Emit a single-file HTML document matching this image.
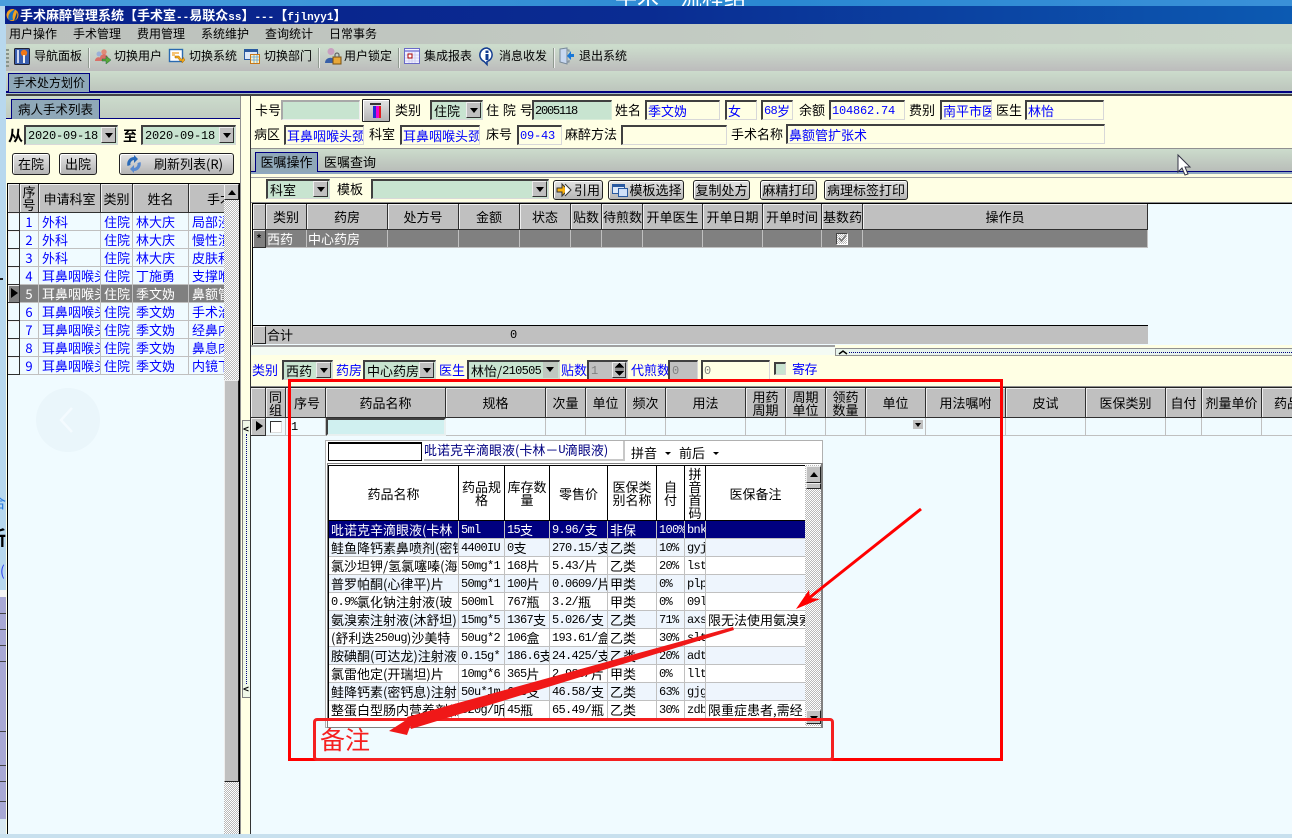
<!DOCTYPE html>
<html lang="zh-CN"><head><meta charset="utf-8"><title>手术麻醉管理系统</title>
<style>
*{box-sizing:border-box}
html,body{margin:0;padding:0;width:1292px;height:838px;overflow:hidden;background:#c8e0ee}
body{position:relative;font:13px/18px "WenQuanYi Zen Hei","Noto Sans CJK SC",sans-serif;color:#000}
i{font:normal 12px/17px "Liberation Mono",monospace;letter-spacing:-.7px;vertical-align:top;position:relative;top:1px}
u{font:bold 11px/1 "Liberation Mono",monospace;text-decoration:none}
.b{position:absolute}
.t{position:absolute;white-space:nowrap;line-height:18px}
.s12{font-size:12px}
.bl{color:#00f}
.i{position:absolute;height:20px;background:#ffffe4;border:2px solid;border-color:#404040 #d8d8d8 #d8d8d8 #404040;border-right-width:1px;border-bottom-width:1px;color:#00f;padding:0 1px;overflow:hidden;white-space:nowrap;line-height:17px}
.g{background:#c8e4d0;color:#000}
.c{position:absolute;height:20px;background:#c8e4d0;border:2px solid;border-color:#404040 #d8d8d8 #d8d8d8 #404040;border-right-width:1px;border-bottom-width:1px;padding:0 2px;white-space:nowrap;overflow:hidden;line-height:17px}
.a{position:absolute;right:1px;top:0;width:15px;height:16px;background:#c0c0c0;border:1px solid;border-color:#eee #303030 #303030 #eee}
.a:after{content:"";position:absolute;left:3px;top:5px;border:4px solid transparent;border-top:5px solid #000;border-bottom:0}
.btn{position:absolute;height:20px;background:linear-gradient(#e4e4e4,#b4b4b4);border:1px solid #222;border-radius:3px;text-align:center;line-height:17px;white-space:nowrap;box-shadow:inset 1px 1px 0 #fff}
table{position:absolute;border-collapse:separate;border-spacing:0;table-layout:fixed;left:0;top:0}
td,th{padding:0 1px;overflow:hidden;white-space:nowrap;font-weight:normal;height:18px;line-height:17px;border-right:1px solid #c0c0c0;border-bottom:1px solid #c0c0c0}
th{background:#c0c0c0;text-align:center;border-right:1px solid #303030;border-bottom:1px solid #303030;box-shadow:inset 1px 1px 0 #f0f0f0}
th.w{white-space:normal;line-height:13px;padding:0}
td.h{background:#c0c0c0;border-right:1px solid #303030;border-bottom:1px solid #303030;box-shadow:inset 1px 1px 0 #f0f0f0;position:relative;padding:0}
.tr{position:absolute;left:3px;top:3px;border:5px solid transparent;border-left:7px solid #000;border-right:0;width:0;height:0}
.lg td{color:#00f;background:#f0fbff;padding:0 0 0 3px}
.lg tr.sel td{background:#808080;color:#fff}
.lg td.n{text-align:center;padding:0}
.lg td.h{padding:0}
.mg td{background:#808080;color:#fff}
.pg td{background:#fff;padding:0 1px 0 2px}
.pg tr.e td{background:#eef5fd}
.pg tr.sel td{background:#000080;color:#fff}
.pg th{background:#fff;box-shadow:none;border-right:1px solid #000;border-bottom:1px solid #000}
.ck{background:repeating-conic-gradient(#b8b8b8 0 25%,#fff 0 50%) 0 0/2px 2px}
.sb{position:absolute;background:#c0c0c0;border:1px solid;border-color:#eee #222 #222 #eee}
.up:after,.dn:after{content:"";position:absolute;left:3px;top:5px;border:4px solid transparent}
.up:after{border-bottom:5px solid #000;border-top:0}
.dn:after{border-top:5px solid #000;border-bottom:0}
.sep{position:absolute;top:48px;width:2px;height:20px;background:#909a90;border-right:1px solid #eee}
.tab{position:absolute;background:#8fa8b8;border:1px solid #000080;border-bottom:0;text-align:center;white-space:nowrap;line-height:18px}
svg{position:absolute;overflow:visible}
</style></head><body>

<!-- background behind the window -->
<div class="b" style="left:0;top:0;width:1292px;height:6px;background:linear-gradient(90deg,#4a9edc,#2a88d2 60%,#3a90d8);overflow:hidden">
<span class="t" style="left:615px;top:-16px;font-size:22px;line-height:26px;color:#fff">手术</span>
<span class="t" style="left:680px;top:-16px;font-size:22px;line-height:26px;color:#fff">流程结</span></div>
<div class="b" style="left:0;top:6px;width:7px;height:590px;background:#b8d8ee"></div>
<div class="b" style="left:0;top:590px;width:7px;height:8px;background:#f4f4f4"></div>
<div class="b" style="left:0;top:597px;width:6px;height:222px;background:#a8a8d4"></div>
<div class="b" style="left:0;top:613px;width:6px;height:1px;background:#444"></div>
<div class="b" style="left:0;top:629px;width:6px;height:1px;background:#444"></div>
<div class="b" style="left:0;top:645px;width:6px;height:1px;background:#444"></div>
<div class="b" style="left:0;top:661px;width:6px;height:1px;background:#444"></div>
<div class="b" style="left:0;top:731px;width:6px;height:1px;background:#444"></div>
<div class="b" style="left:0;top:765px;width:6px;height:1px;background:#444"></div>
<div class="b" style="left:0;top:781px;width:6px;height:1px;background:#444"></div>
<div class="b" style="left:0;top:801px;width:6px;height:1px;background:#444"></div>
<div class="b" style="left:0;top:819px;width:7px;height:15px;background:#d8e8f2"></div>
<div class="b" style="left:0;top:834px;width:1292px;height:4px;background:#c8e0ee"></div>
<div class="b" style="left:0;top:278px;width:3px;height:2px;background:#222"></div>
<div class="b" style="left:0;top:480px;width:6px;height:110px;overflow:hidden">
<span class="t" style="left:-9px;top:14px;font-size:15px;color:#2a7ae0">合</span>
<span class="t" style="left:-14px;top:48px;font-size:20px;font-weight:bold">新</span>
<span class="t" style="left:0;top:82px;font-size:14px;color:#3040f0">(</span>
</div>

<!-- title -->
<div class="b" style="left:5px;top:6px;width:1287px;height:18px;background:linear-gradient(90deg,#08208a,#0a2c92 50%,#0c5ab2)"></div>
<svg style="left:6px;top:8px" width="13" height="14" viewBox="0 0 13 14"><circle cx="6.5" cy="7" r="6" fill="#f0a020"/><path d="M3 12C1 8 4 3 10 1c-3 3-4 7-3 11z" fill="#1a6fc0"/><path d="M8 13c3-2 4-5 3-9-1 3-2 6-3 9z" fill="#0a3a80"/></svg>
<div class="t" style="left:20px;top:6px;color:#fff;font-weight:bold;font-size:13px">手术麻醉管理系统【手术室<u>--</u>易联众<u>ss</u>】<u>---</u>【<u>fjlnyy1</u>】</div>

<!-- menu -->
<div class="b" style="left:6px;top:24px;width:1286px;height:20px;background:linear-gradient(90deg,#bcc0bc,#c8d4c8)"></div>
<span class="t s12" style="left:9px;top:25px">用户操作</span>
<span class="t s12" style="left:73px;top:25px">手术管理</span>
<span class="t s12" style="left:137px;top:25px">费用管理</span>
<span class="t s12" style="left:201px;top:25px">系统维护</span>
<span class="t s12" style="left:265px;top:25px">查询统计</span>
<span class="t s12" style="left:329px;top:25px">日常事务</span>

<!-- toolbar -->
<div class="b" style="left:6px;top:44px;width:1286px;height:27px;background:linear-gradient(#ccdccc 10%,#bcbcbc)"></div>
<div class="b" style="left:6px;top:49px;width:3px;height:18px;background:repeating-linear-gradient(#8a948a 0 2px,transparent 2px 4px)"></div>
<svg style="left:14px;top:48px" width="16" height="17" viewBox="0 0 16 17"><rect x=".5" y=".5" width="15" height="16" rx="1" fill="#3a5fb0" stroke="#223"/><path d="M3 2h2v13H3z" fill="#cfd8f0"/><circle cx="10" cy="5" r="3.2" fill="#f07818"/><path d="M9 7h2v8H9z" fill="#eee"/></svg>
<span class="t s12" style="left:34px;top:47px">导航面板</span>
<div class="sep" style="left:88px"></div>
<svg style="left:94px;top:48px" width="17" height="17" viewBox="0 0 17 17"><circle cx="5" cy="6" r="2.5" fill="#9ab0d8"/><circle cx="10" cy="4" r="2.7" fill="#e08a78"/><path d="M1 13c0-5 7-5 7 0zM6 10c0-5 8-5 8 0v1H6z" fill="#d87068"/><path d="M8 11h4V8l5 4-5 4v-3H8z" fill="#58a838" stroke="#264" stroke-width=".5"/></svg>
<span class="t s12" style="left:114px;top:47px">切换用户</span>
<svg style="left:169px;top:49px" width="16" height="16" viewBox="0 0 16 16"><rect x=".5" y=".5" width="13" height="12" fill="#fff" stroke="#2a6ab0" stroke-width="1.4"/><path d="M3 4h7M3 6h3" stroke="#f0a020" stroke-width="1.2"/><path d="M6 7h4l2 3h2v-2l2 3-3 3v-2h-2l-2-3H6z" fill="#f0a818" stroke="#a60" stroke-width=".5"/></svg>
<span class="t s12" style="left:189px;top:47px">切换系统</span>
<svg style="left:244px;top:48px" width="16" height="17" viewBox="0 0 16 17"><rect x=".5" y="1.5" width="13" height="10" fill="#dde8f8" stroke="#2a5aa0"/><path d="M1 2h12v2H1z" fill="#2a5aa0"/><rect x="6.5" y="6.5" width="9" height="9" fill="#fff4c8" stroke="#c87818"/><path d="M7 9h8M10 7v8M13 7v8M7 12h8" stroke="#58a0d8" stroke-width=".8"/></svg>
<span class="t s12" style="left:264px;top:47px">切换部门</span>
<div class="sep" style="left:318px"></div>
<svg style="left:325px;top:47px" width="17" height="18" viewBox="0 0 17 18"><circle cx="6" cy="4.5" r="3.5" fill="#c8a0c0"/><path d="M0 16c0-7 11-7 11 0z" fill="#3860a8"/><rect x="8" y="10" width="8" height="7" fill="#e8a838" stroke="#7a5010"/><path d="M10 10V8a2 2 0 0 1 4 0v2" fill="none" stroke="#666" stroke-width="1.2"/></svg>
<span class="t s12" style="left:344px;top:47px">用户锁定</span>
<div class="sep" style="left:398px"></div>
<svg style="left:404px;top:48px" width="16" height="16" viewBox="0 0 16 16"><rect x=".5" y=".5" width="15" height="15" fill="#f2f2ff" stroke="#6a6ac8"/><path d="M1 2h14v2H1z" fill="#9a9ae0"/><path d="M1 7h14M1 10h14M1 13h14M5 4v11M8 4v11M11 4v11" stroke="#c8c8f0" stroke-width=".8"/><rect x="4" y="6" width="4" height="4" fill="#fff" stroke="#a00"/></svg>
<span class="t s12" style="left:424px;top:47px">集成报表</span>
<svg style="left:479px;top:47px" width="16" height="18" viewBox="0 0 16 18"><path d="M8 1a7 7 0 0 0-3 13.400L8 17.500v-3A7 7 0 0 0 8 1z" fill="#fff" stroke="#123c90" stroke-width="1.500"/><rect x="6.500" y="3.500" width="3" height="2.500" fill="#123c90"/><rect x="6.500" y="7" width="3" height="6" fill="#123c90"/></svg>
<span class="t s12" style="left:499px;top:47px">消息收发</span>
<div class="sep" style="left:553px"></div>
<svg style="left:559px;top:47px" width="16" height="18" viewBox="0 0 16 18"><path d="M1 2l7-1v16l-7-2z" fill="#c8d8f0" stroke="#789"/><path d="M8 3h2v2M10 13v2H8" fill="none" stroke="#789"/><path d="M15 7h-3V4L8 9l4 4v-3h3z" fill="#1878d8"/></svg>
<span class="t s12" style="left:579px;top:47px">退出系统</span>

<!-- doc tab bar -->
<div class="b" style="left:6px;top:71px;width:1286px;height:21px;background:linear-gradient(#ccdccc,#bcc4bc)"></div>
<div class="b" style="left:6px;top:91px;width:1286px;height:2px;background:#000080"></div>
<div class="b" style="left:6px;top:93px;width:1286px;height:1px;background:#a8c0c8"></div>
<div class="b" style="left:6px;top:94px;width:1286px;height:2px;background:#444"></div>
<div class="tab s12" style="left:8px;top:73px;width:82px;height:19px">手术处方划价</div>

<!-- left panel -->
<div class="b" style="left:6px;top:96px;width:236px;height:738px;background:#ffffe4"></div>
<div class="b" style="left:6px;top:96px;width:236px;height:23px;background:linear-gradient(#ccdccc,#c0cac0)"></div>
<div class="b" style="left:6px;top:118px;width:235px;height:1px;background:#000080"></div>
<div class="tab" style="left:11px;top:99px;width:89px;height:20px;font-size:12.500px">病人手术列表</div>
<span class="t" style="left:8px;top:127px;font-size:15px;font-weight:bold">从</span>
<div class="c" style="left:24px;top:125px;width:94px;height:20px"><i style="letter-spacing:-.2px">2020-09-18</i><span class="a"></span></div>
<span class="t" style="left:123px;top:127px;font-size:14px;font-weight:bold">至</span>
<div class="c" style="left:141px;top:125px;width:95px;height:20px"><i style="letter-spacing:-.2px">2020-09-18</i><span class="a"></span></div>
<div class="btn" style="left:12px;top:153px;width:38px;height:22px;line-height:19px">在院</div>
<div class="btn" style="left:59px;top:153px;width:38px;height:22px;line-height:19px">出院</div>
<div class="btn" style="left:119px;top:153px;width:115px;height:22px;line-height:19px;padding-left:24px">刷新列表(R)</div>
<svg style="left:125px;top:155px" width="18" height="18" viewBox="0 0 18 18"><path d="M9 2a7 7 0 0 0-6.500 9l3-1A4 4 0 0 1 9 5V8l4-4-4-4z" fill="#2a6ab8"/><path d="M9 16a7 7 0 0 0 6.500-9l-3 1A4 4 0 0 1 9 13v-3l-4 4 4 4z" fill="#5a8ad0"/></svg>

<!-- left grid -->
<div class="b" style="left:7px;top:183px;width:233px;height:651px;background:#f0fbff;border-left:1px solid #000;border-top:1px solid #000;border-right:1px solid #000"></div>
<div class="b" style="left:8px;top:184px;width:216px;height:650px;overflow:hidden">
<table class="lg" style="width:224px"><colgroup><col style="width:12px"><col style="width:19px"><col style="width:62px"><col style="width:32px"><col style="width:56px"><col style="width:43px"></colgroup>
<tr style="height:29px"><th></th><th class="w" style="height:29px">序号</th><th>申请科室</th><th>类别</th><th>姓名</th><th style="text-align:left;padding-left:18px">手术</th></tr>
<tr><td class="h"></td><td class="n">1</td><td>外科</td><td>住院</td><td>林大庆</td><td>局部浸润</td></tr>
<tr><td class="h"></td><td class="n">2</td><td>外科</td><td>住院</td><td>林大庆</td><td>慢性溃疡</td></tr>
<tr><td class="h"></td><td class="n">3</td><td>外科</td><td>住院</td><td>林大庆</td><td>皮肤和</td></tr>
<tr><td class="h"></td><td class="n">4</td><td>耳鼻咽喉头颈外</td><td>住院</td><td>丁施勇</td><td>支撑喉</td></tr>
<tr class="sel"><td class="h"><span class="tr"></span></td><td class="n">5</td><td>耳鼻咽喉头颈外</td><td>住院</td><td>季文妫</td><td>鼻额管</td></tr>
<tr><td class="h"></td><td class="n">6</td><td>耳鼻咽喉头颈外</td><td>住院</td><td>季文妫</td><td>手术治</td></tr>
<tr><td class="h"></td><td class="n">7</td><td>耳鼻咽喉头颈外</td><td>住院</td><td>季文妫</td><td>经鼻内</td></tr>
<tr><td class="h"></td><td class="n">8</td><td>耳鼻咽喉头颈外</td><td>住院</td><td>季文妫</td><td>鼻息肉</td></tr>
<tr><td class="h"></td><td class="n">9</td><td>耳鼻咽喉头颈外</td><td>住院</td><td>季文妫</td><td>内镜下</td></tr>
</table></div>
<div class="b ck" style="left:224px;top:184px;width:15px;height:650px"></div>
<div class="sb up" style="left:224px;top:184px;width:15px;height:16px"></div>
<div class="sb" style="left:224px;top:380px;width:15px;height:402px;border-color:#eee #222 #222 #eee"></div>

<!-- vertical splitter -->
<div class="b" style="left:240px;top:96px;width:11px;height:738px;background:#ffffe4;border-left:1px solid #909090"></div>
<div class="b" style="left:242px;top:420px;width:9px;height:278px;background:#f0f8e8;border:1px solid #808080"></div>
<div class="b" style="left:246px;top:434px;width:0;height:250px;border-left:1px dotted #000080"></div>
<span class="t" style="left:243px;top:420px;font-size:10px;font-weight:bold">&lt;</span>
<span class="t" style="left:243px;top:680px;font-size:10px;font-weight:bold">&lt;</span>

<!-- right top info -->
<div class="b" style="left:251px;top:96px;width:1041px;height:738px;background:#ffffe4"></div>
<div class="b" style="left:250px;top:96px;width:1px;height:738px;background:#333"></div>
<span class="t" style="left:255px;top:101px">卡号</span>
<div class="i g" style="left:281px;top:100px;width:79px;border-color:#a8a8a8 #eee #eee #a8a8a8"></div>
<div class="btn" style="left:362px;top:99px;width:28px;height:23px;border-radius:1px"></div>
<svg style="left:368px;top:102px" width="15" height="17" viewBox="0 0 15 17"><path d="M2 1h11v2H2z" fill="#333"/><rect x="5" y="4" width="8" height="12" fill="#f000d0"/><rect x="5" y="4" width="3" height="12" fill="#2030d0"/><rect x="11" y="4" width="2" height="12" fill="#e02020"/></svg>
<span class="t" style="left:395px;top:101px">类别</span>
<div class="c" style="left:430px;top:100px;width:53px"><span>住院</span><span class="a"></span></div>
<span class="t" style="left:486px;top:101px;word-spacing:1px">住 院 号</span>
<div class="i g" style="left:532px;top:100px;width:80px;border-color:#404040 #d8ecd8 #d8ecd8 #404040"><i style="letter-spacing:-1.2px">2005118</i></div>
<span class="t" style="left:615px;top:101px">姓名</span>
<div class="i" style="left:645px;top:100px;width:75px">季文妫</div>
<div class="i" style="left:725px;top:100px;width:32px">女</div>
<div class="i" style="left:761px;top:100px;width:32px"><i>68</i>岁</div>
<span class="t" style="left:799px;top:101px">余额</span>
<div class="i" style="left:829px;top:100px;width:76px"><i style="letter-spacing:-.2px">104862.74</i></div>
<span class="t" style="left:909px;top:101px">费别</span>
<div class="i" style="left:940px;top:100px;width:52px">南平市医</div>
<span class="t" style="left:996px;top:101px">医生</span>
<div class="i" style="left:1025px;top:100px;width:79px">林怡</div>

<span class="t" style="left:254px;top:125px">病区</span>
<div class="i" style="left:284px;top:125px;width:80px">耳鼻咽喉头颈外</div>
<span class="t" style="left:369px;top:125px">科室</span>
<div class="i" style="left:400px;top:125px;width:80px">耳鼻咽喉头颈外</div>
<span class="t" style="left:486px;top:125px">床号</span>
<div class="i" style="left:517px;top:125px;width:45px"><i style="letter-spacing:-.2px">09-43</i></div>
<span class="t" style="left:565px;top:125px">麻醉方法</span>
<div class="i" style="left:621px;top:125px;width:106px"></div>
<span class="t" style="left:731px;top:125px">手术名称</span>
<div class="i" style="left:786px;top:124px;width:319px">鼻额管扩张术</div>

<div class="b" style="left:251px;top:148px;width:1041px;height:1px;background:#909090"></div>
<div class="b" style="left:251px;top:149px;width:1041px;height:23px;background:linear-gradient(#ccdccc,#b8bcb8)"></div>
<div class="b" style="left:251px;top:171px;width:1041px;height:1px;background:#000080"></div>
<div class="b" style="left:251px;top:172px;width:1041px;height:2px;background:#8fa8c0"></div>
<div class="b" style="left:251px;top:177px;width:1041px;height:1px;background:#a0a0a0"></div>
<div class="tab" style="left:255px;top:152px;width:63px;height:20px">医嘱操作</div>
<span class="t" style="left:324px;top:153px">医嘱查询</span>

<!-- order toolbar -->
<div class="c" style="left:266px;top:179px;width:64px"><span>科室</span><span class="a"></span></div>
<span class="t" style="left:337px;top:180px">模板</span>
<div class="c" style="left:371px;top:179px;width:178px"><span class="a"></span></div>
<div class="btn" style="left:553px;top:180px;width:50px;padding-left:18px">引用</div>
<svg style="left:556px;top:183px" width="16" height="14" viewBox="0 0 16 14"><path d="M6 1l6 6-6 6V9H1V5h5z" fill="#f8b010" stroke="#333"/><path d="M9 1l6 6-6 6" fill="#fff" stroke="#333"/></svg>
<div class="btn" style="left:608px;top:180px;width:76px;padding-left:19px">模板选择</div>
<svg style="left:612px;top:183px" width="16" height="14" viewBox="0 0 16 14"><rect x=".5" y="1.500" width="12" height="9" fill="#dde8f8" stroke="#2a5aa0"/><path d="M1 2h11v2H1z" fill="#2a5aa0"/><rect x="6.500" y="5.500" width="9" height="8" fill="#cfe0f8" stroke="#2a5aa0"/></svg>
<div class="btn" style="left:693px;top:180px;width:57px">复制处方</div>
<div class="btn" style="left:760px;top:180px;width:57px">麻精打印</div>
<div class="btn" style="left:824px;top:180px;width:84px">病理标签打印</div>

<!-- upper grid -->
<div class="b" style="left:251px;top:202px;width:1041px;height:1px;background:#909090"></div>
<div class="b" style="left:252px;top:203px;width:1040px;height:1px;background:#000"></div>
<div class="b" style="left:252px;top:204px;width:1040px;height:141px;background:#f0fbff;border-left:1px solid #000"></div>
<div class="b" style="left:253px;top:204px;width:895px;height:44px;overflow:hidden">
<table class="mg" style="width:895px"><colgroup><col style="width:13px"><col style="width:41px"><col style="width:81px"><col style="width:71px"><col style="width:61px"><col style="width:51px"><col style="width:31px"><col style="width:41px"><col style="width:60px"><col style="width:60px"><col style="width:59px"><col style="width:41px"><col style="width:285px"></colgroup>
<tr style="height:26px"><th style="height:26px"></th><th>类别</th><th>药房</th><th>处方号</th><th>金额</th><th>状态</th><th>贴数</th><th>待煎数</th><th>开单医生</th><th>开单日期</th><th>开单时间</th><th>基数药</th><th>操作员</th></tr>
<tr><td class="h" style="text-align:center;color:#000">*</td><td>西药</td><td>中心药房</td><td></td><td></td><td></td><td></td><td></td><td></td><td></td><td></td><td style="position:relative"><span class="b ck" style="left:14px;top:3px;width:12px;height:12px;border:1px solid;border-color:#444 #fff #fff #444;background-size:2px 2px"></span><svg style="left:16px;top:4px" width="9" height="9" viewBox="0 0 9 9"><path d="M1 4l2.500 3L8 1" fill="none" stroke="#777" stroke-width="1.500"/></svg></td><td></td></tr>
</table></div>
<div class="b" style="left:253px;top:325px;width:895px;height:1px;background:#000"></div>
<div class="b" style="left:253px;top:326px;width:895px;height:18px;background:#c0c0c0"></div>
<div class="sb" style="left:253px;top:326px;width:13px;height:18px"></div>
<span class="t" style="left:267px;top:326px">合计</span>
<span class="t" style="left:510px;top:326px"><i>0</i></span>
<div class="b" style="left:251px;top:345px;width:584px;height:2px;background:#a0a0a0"></div>
<div class="b" style="left:251px;top:347px;width:1041px;height:9px;background:#ffffe4"></div>
<div class="b" style="left:251px;top:347px;width:584px;height:8px;background:#f4fbf4"></div>
<div class="b" style="left:835px;top:348px;width:457px;height:8px;background:#e8f4ec;border:1px solid #909090;border-right:0"></div>
<div class="b" style="left:849px;top:352px;width:443px;height:0;border-top:1px dotted #000080"></div>
<svg style="left:839px;top:350px" width="8" height="5" viewBox="0 0 8 5"><path d="M0 4l4-3 4 3" fill="none" stroke="#000" stroke-width="1.500"/></svg>

<!-- mid controls -->
<span class="t bl" style="left:252px;top:361px">类别</span>
<div class="c" style="left:282px;top:360px;width:51px"><span>西药</span><span class="a"></span></div>
<span class="t bl" style="left:336px;top:361px">药房</span>
<div class="c" style="left:363px;top:360px;width:73px"><span>中心药房</span><span class="a"></span></div>
<span class="t bl" style="left:439px;top:361px">医生</span>
<div class="c" style="left:467px;top:360px;width:93px"><span>林怡/<i>210505</i></span><span class="a" style="border:0;background:#c0c8c0"></span></div>
<span class="t bl" style="left:561px;top:361px">贴数</span>
<div class="c" style="left:587px;top:360px;width:41px;background:#c0c0c0;color:#808080"><i>1</i><span class="b" style="right:1px;top:0;width:14px;height:16px;background:#c0c0c0;border:1px solid;border-color:#eee #333 #333 #eee"></span></div>
<svg style="left:615px;top:363px" width="9" height="13" viewBox="0 0 9 13"><path d="M4.500 0L9 4.500H0zM0 8h9L4.500 12.500zM0 6h9" fill="#000" stroke="#000" stroke-width=".5"/></svg>
<span class="t bl" style="left:631px;top:361px">代煎数</span>
<div class="c" style="left:668px;top:360px;width:30px;background:#c0c0c0;color:#808080"><i>0</i></div>
<div class="i" style="left:701px;top:360px;width:69px;color:#808080"><i>0</i></div>
<div class="c" style="left:774px;top:362px;width:12px;height:13px"></div>
<span class="t bl" style="left:792px;top:360px;letter-spacing:-.5px">寄存</span>

<!-- lower grid -->
<div class="b" style="left:251px;top:386px;width:1041px;height:1px;background:#909090"></div>
<div class="b" style="left:251px;top:387px;width:1041px;height:447px;background:#f0fbff;border-top:1px solid #222"></div>
<div class="b" style="left:251px;top:388px;width:1041px;height:49px;overflow:hidden">
<table style="width:1060px"><colgroup><col style="width:15px"><col style="width:20px"><col style="width:40px"><col style="width:120px"><col style="width:100px"><col style="width:40px"><col style="width:40px"><col style="width:40px"><col style="width:80px"><col style="width:40px"><col style="width:40px"><col style="width:40px"><col style="width:60px"><col style="width:80px"><col style="width:80px"><col style="width:80px"><col style="width:36px"><col style="width:60px"><col style="width:69px"></colgroup>
<tr style="height:30px"><th style="height:30px"></th><th class="w">同<br>组</th><th style="padding-left:4px">序号</th><th>药品名称</th><th>规格</th><th>次量</th><th>单位</th><th>频次</th><th>用法</th><th class="w">用药<br>周期</th><th class="w">周期<br>单位</th><th class="w">领药<br>数量</th><th>单位</th><th>用法嘱咐</th><th>皮试</th><th>医保类别</th><th>自付</th><th>剂量单价</th><th style="text-align:left;padding-left:12px">药品</th></tr>
<tr><td class="h"><span class="tr" style="left:5px"></span></td><td style="position:relative;background:#f0fbff"><span class="b" style="left:4px;top:3px;width:12px;height:12px;background:#fff;border:1px solid;border-color:#333 #ddd #ddd #333"></span></td><td style="background:#f0fbff;padding-left:5px"><i>1</i></td><td style="background:#d0f0f0;border:2px solid;border-color:#404040 #e8f0f0 #e8f0f0 #404040"></td><td></td><td></td><td></td><td></td><td></td><td></td><td></td><td></td><td style="position:relative"><span class="b" style="right:2px;top:2px;width:10px;height:9px;background:#c0c0c0"></span><span class="b" style="right:4px;top:5px;border:3px solid transparent;border-top:4px solid #000;border-bottom:0"></span></td><td></td><td></td><td></td><td></td><td></td><td></td></tr>
</table></div>

<!-- popup -->
<div class="b" style="left:325px;top:440px;width:498px;height:288px;background:#fff;border:1px solid #b0b0b0"></div>
<div class="i" style="left:328px;top:442px;width:94px;height:19px;background:#fff;border:1px solid #000;border-top-width:2px;border-left-width:1px"></div>
<div class="t" style="left:424px;top:441px;width:201px;height:20px;color:#000080;background:#fff;border-right:2px solid #c8c8c8;border-bottom:2px solid #c8c8c8;overflow:hidden">吡诺克辛滴眼液(卡林－<i>U</i>滴眼液)</div>
<span class="t" style="left:631px;top:444px">拼音</span>
<span class="b" style="left:665px;top:452px;border:3px solid transparent;border-top:3px solid #000;border-bottom:0"></span>
<span class="t" style="left:679px;top:444px">前后</span>
<span class="b" style="left:713px;top:452px;border:3px solid transparent;border-top:3px solid #000;border-bottom:0"></span>
<div class="b" style="left:327px;top:463px;width:496px;height:265px;border:1px solid #808080;border-right-width:2px;background:#fff"></div>
<div class="b" style="left:328px;top:465px;width:477px;height:253px;overflow:hidden;border-left:1px solid #000;border-top:1px solid #000">
<table class="pg" style="width:477px"><colgroup><col style="width:130px"><col style="width:46px"><col style="width:45px"><col style="width:58px"><col style="width:49px"><col style="width:28px"><col style="width:21px"><col style="width:100px"></colgroup>
<tr style="height:55px"><th style="height:55px">药品名称</th><th class="w">药品规<br>格</th><th class="w">库存数<br>量</th><th>零售价</th><th class="w">医保类<br>别名称</th><th class="w">自<br>付</th><th class="w">拼<br>音<br>首<br>码</th><th>医保备注</th></tr>
<tr class="sel"><td>吡诺克辛滴眼液(卡林</td><td><i>5ml</i></td><td><i>15</i>支</td><td><i>9.96/</i>支</td><td>非保</td><td><i>100%</i></td><td><i>bnk</i></td><td></td></tr>
<tr class="e"><td>鲑鱼降钙素鼻喷剂(密钙</td><td><i>4400IU</i></td><td><i>0</i>支</td><td><i>270.15/</i>支</td><td>乙类</td><td><i>10%</i></td><td><i>gyj</i></td><td></td></tr>
<tr><td>氯沙坦钾/氢氯噻嗪(海</td><td><i>50mg*1</i></td><td><i>168</i>片</td><td><i>5.43/</i>片</td><td>乙类</td><td><i>20%</i></td><td><i>lst</i></td><td></td></tr>
<tr class="e"><td>普罗帕酮(心律平)片</td><td><i>50mg*1</i></td><td><i>100</i>片</td><td><i>0.0609/</i>片</td><td>甲类</td><td><i>0%</i></td><td><i>plp</i></td><td></td></tr>
<tr><td><i>0.9%</i>氯化钠注射液(玻</td><td><i>500ml</i></td><td><i>767</i>瓶</td><td><i>3.2/</i>瓶</td><td>甲类</td><td><i>0%</i></td><td><i>09l</i></td><td></td></tr>
<tr class="e"><td>氨溴索注射液(沐舒坦)</td><td><i>15mg*5</i></td><td><i>1367</i>支</td><td><i>5.026/</i>支</td><td>乙类</td><td><i>71%</i></td><td><i>axs</i></td><td style="background:#fff">限无法使用氨溴索</td></tr>
<tr><td>(舒利迭<i>250ug</i>)沙美特</td><td><i>50ug*2</i></td><td><i>106</i>盒</td><td><i>193.61/</i>盒</td><td>乙类</td><td><i>30%</i></td><td><i>slt</i></td><td></td></tr>
<tr class="e"><td>胺碘酮(可达龙)注射液</td><td><i>0.15g*</i></td><td><i>186.6</i>支</td><td><i>24.425/</i>支</td><td>乙类</td><td><i>20%</i></td><td><i>adt</i></td><td></td></tr>
<tr><td>氯雷他定(开瑞坦)片</td><td><i>10mg*6</i></td><td><i>365</i>片</td><td><i>2.980/</i>片</td><td>甲类</td><td><i>0%</i></td><td><i>llt</i></td><td></td></tr>
<tr class="e"><td>鲑降钙素(密钙息)注射</td><td><i>50u*1m</i></td><td><i>618</i>支</td><td><i>46.58/</i>支</td><td>乙类</td><td><i>63%</i></td><td><i>gjg</i></td><td></td></tr>
<tr><td>整蛋白型肠内营养剂(粉</td><td><i>320g/</i>听</td><td><i>45</i>瓶</td><td><i>65.49/</i>瓶</td><td>乙类</td><td><i>30%</i></td><td><i>zdb</i></td><td>限重症患者,需经</td></tr>
</table></div>
<div class="b ck" style="left:805px;top:465px;width:16px;height:261px"></div>
<div class="sb up" style="left:806px;top:466px;width:15px;height:17px"></div>
<div class="sb" style="left:806px;top:483px;width:15px;height:6px"></div>
<div class="sb dn" style="left:806px;top:710px;width:15px;height:14px"></div>

<!-- faint overlay circle -->
<div class="b" style="left:36px;top:388px;width:64px;height:64px;border-radius:50%;background:#eaf6fb"></div>
<svg style="left:58px;top:406px" width="16" height="28" viewBox="0 0 16 28"><path d="M14 2L3 14l11 12" fill="none" stroke="#f4fbff" stroke-width="2.500"/></svg>

<!-- annotations -->
<div class="b" style="left:288px;top:379px;width:715px;height:382px;border:3px solid #f00"></div>
<div class="b" style="left:313px;top:718px;width:521px;height:43px;border:3px solid #f42020;border-radius:4px"></div>
<span class="t" style="left:320px;top:725px;font-size:25px;line-height:28px;color:#f62020">备注</span>
<svg style="left:0;top:0" width="1292" height="838" viewBox="0 0 1292 838">
<path d="M921 509L804 602" stroke="#f00" stroke-width="3" fill="none"/>
<path d="M796 609L809 590L810 598L820 599Z" fill="#f00"/>
<path d="M733 627L734 630L411 729L407 717Z" fill="#f01818"/>
<path d="M414 715L389 731L407 735L411 724Z" fill="#f01818"/>
<path d="M1178 155V172L1182 168L1185 175L1188 174L1185 167H1190Z" fill="#fff" stroke="#334" stroke-width="1"/>
</svg>
</body></html>
